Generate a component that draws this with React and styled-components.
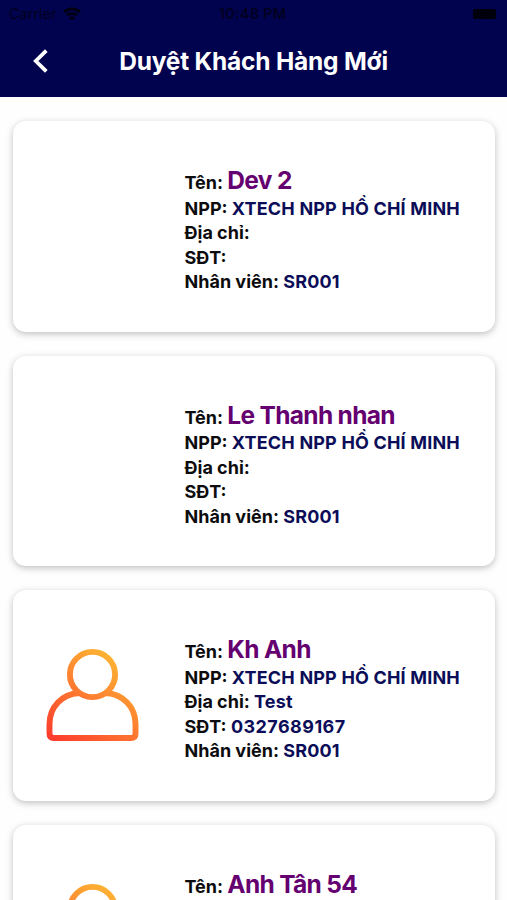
import React from 'react';
import styled, { createGlobalStyle } from 'styled-components';

const GlobalStyle = createGlobalStyle`
  * { box-sizing: border-box; }
  body {
    margin: 0;
    background: #fefefe;
    font-family: Inter, "Liberation Sans", sans-serif;
    overflow: hidden;
  }
`;

const Screen = styled.div`
  height: 900px;
  overflow: hidden;
  display: flex;
  flex-direction: column;
`;

const Header = styled.header`
  flex: none;
  height: 96.5px;
  background: #01034f;
`;

const StatusBar = styled.div`
  height: 28px;
  padding: 0 11px 0 9px;
  display: grid;
  grid-template-columns: 1fr auto 1fr;
  align-items: center;
  font-size: 14.5px;
  line-height: 28px;
  color: #01011f;
`;

const Carrier = styled.div`
  display: flex;
  align-items: center;
  gap: 6px;
`;

const Clock = styled.div`
  font-weight: 600;
  letter-spacing: 0.25px;
`;

const Battery = styled.div`
  justify-self: end;
  width: 23px;
  height: 10px;
  margin-top: -1px;
  border-radius: 2px;
  background: #00000c;
`;

const NavBar = styled.div`
  height: 66px;
  display: grid;
  grid-template-columns: 80px 1fr 80px;
  align-items: center;
`;

const BackButton = styled.button`
  padding: 0 0 0 32px;
  border: 0;
  background: none;
  display: flex;
  color: #fff;
`;

const Title = styled.h1`
  margin: 0;
  text-align: center;
  color: #fff;
  font-size: 24.5px;
  line-height: 30px;
  font-weight: 650;
  letter-spacing: -0.2px;
  white-space: nowrap;
`;

const List = styled.main`
  padding: 24.5px 12px 0 13px;
  display: flex;
  flex-direction: column;
  gap: 24px;
`;

const Card = styled.article`
  flex: none;
  height: 210.5px;
  display: grid;
  grid-template-columns: 171.5px 1fr;
  border-radius: 13px;
  background: #fff;
  box-shadow: 0 2px 7px rgba(0, 0, 0, 0.25);
`;

const Avatar = styled.div`
  padding: 55px 0 0 29px;
`;

const Details = styled.div`
  padding-top: 43px;
`;

const Row = styled.div`
  height: ${(p) => (p.$lead ? '32.6px' : '24.5px')};
  line-height: ${(p) => (p.$lead ? '32px' : '24.5px')};
  font-size: 18px;
  font-weight: 650;
  color: #0c0c0e;
  white-space: nowrap;
`;

const Value = styled.span`
  color: #0b0d58;
  letter-spacing: ${(p) => (p.$digits ? '0.45px' : '0.17px')};
`;

const Name = styled.span`
  color: #650070;
  font-size: 24.5px;
  letter-spacing: -0.68px;
`;

const customers = [
  { name: 'Dev 2' },
  { name: 'Le Thanh nhan' },
  { name: 'Kh Anh', address: 'Test', phone: '0327689167', avatar: true },
  { name: 'Anh Tân 54', avatar: true, lastVisible: true },
];

function WifiIcon() {
  return (
    <svg width="18" height="14" viewBox="0 0 18 14" fill="none" stroke="#010112" strokeWidth="2.8">
      <path d="M1 5.2C5.5 0.8 12.5 0.8 17 5.2" />
      <path d="M4 8.5C6.8 5.7 11.2 5.7 14 8.5" />
      <path d="M9 13.5L6.1 10.5C7.7 9 10.3 9 11.9 10.5Z" fill="#010112" stroke="none" />
    </svg>
  );
}

function PersonIcon({ id }) {
  return (
    <svg width="102" height="102" viewBox="0 0 102 102" fill="none">
      <defs>
        <linearGradient id={id} gradientUnits="userSpaceOnUse" x1="13" y1="98" x2="76" y2="10">
          <stop offset="0" stopColor="#fd3a2d" />
          <stop offset="1" stopColor="#fdb833" />
        </linearGradient>
      </defs>
      <g stroke={`url(#${id})`} strokeWidth="5.9" strokeLinejoin="round">
        <circle cx="50.5" cy="29.5" r="22.6" />
        <path d="M37 48C20 49 7.5 62 7.5 79V88.5Q7.5 93 12 93H89Q93.5 93 93.5 88.5V79C93.5 62 81 49 64 48" />
      </g>
    </svg>
  );
}

export default function App() {
  return (
    <Screen>
      <GlobalStyle />
      <Header>
        <StatusBar>
          <Carrier>
            Carrier
            <WifiIcon />
          </Carrier>
          <Clock>10:48 PM</Clock>
          <Battery />
        </StatusBar>
        <NavBar>
          <BackButton aria-label="Back">
            <svg width="18" height="26" viewBox="0 0 18 26" fill="none" stroke="currentColor" strokeWidth="3.8">
              <path d="M14.3 2.7L3.8 13L14.3 23.3" />
            </svg>
          </BackButton>
          <Title>Duyệt Khách Hàng Mới</Title>
        </NavBar>
      </Header>
      <List>
        {customers.map((c, i) => (
          <Card key={c.name}>
            <Avatar>{c.avatar && <PersonIcon id={`person-${i}`} />}</Avatar>
            <Details>
              <Row $lead>Tên: <Name>{c.name}</Name></Row>
              {!c.lastVisible && (
                <>
                  <Row>NPP: <Value>XTECH NPP HỒ CHÍ MINH</Value></Row>
                  <Row>Địa chỉ: <Value>{c.address}</Value></Row>
                  <Row>SĐT: <Value $digits>{c.phone}</Value></Row>
                  <Row>Nhân viên: <Value>SR001</Value></Row>
                </>
              )}
            </Details>
          </Card>
        ))}
      </List>
    </Screen>
  );
}
